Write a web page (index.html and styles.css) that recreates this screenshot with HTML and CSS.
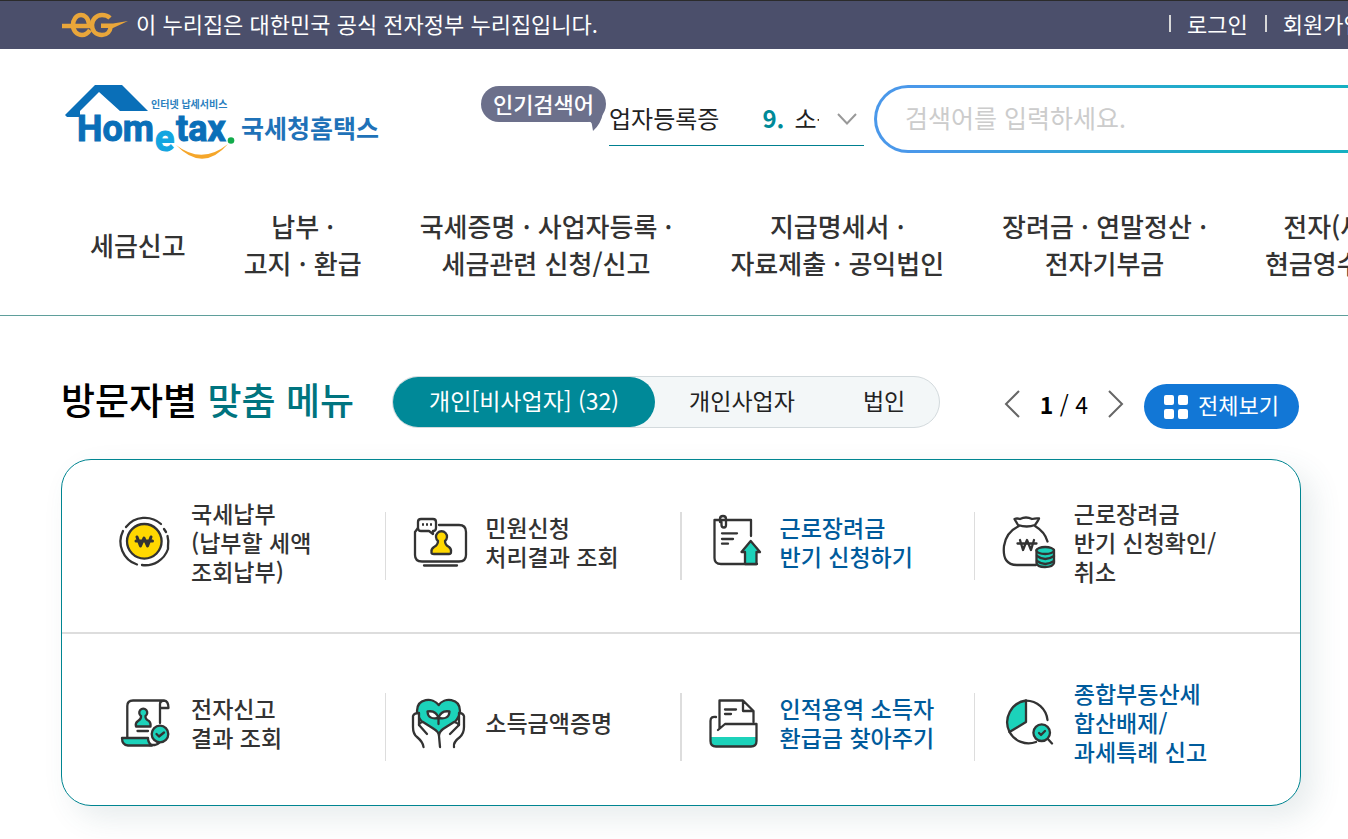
FILE: index.html
```html
<!DOCTYPE html>
<html lang="ko">
<head>
<meta charset="utf-8">
<meta name="viewport" content="width=device-width, initial-scale=1">
<title>국세청 홈택스</title>
<link rel="stylesheet" href="styles.css">
</head>
<body>
<div class="topbar">
  <svg class="eg" viewBox="0 0 66 26" aria-hidden="true">
    <g fill="none" stroke="#e9a63a">
      <path d="M0 14H29" stroke-width="4.500"/>
      <path d="M27 12C26 5 22 3 19 3 14 3 11 8 11 13 11 19 15 23 20 23 23 23 26 21 28 18" stroke-width="4.500"/>
      <path d="M48 6C45 3 42 3 40 3 34 3 30 8 30 13 30 19 34 23 40 23 46 23 48 20 49 14" stroke-width="4.500"/>
    </g>
    <path d="M39 11.500H51L66 9 51 16 39 16Z" fill="#e9a63a"/>
  </svg>
  <p class="topbar-text">이 누리집은 대한민국 공식 전자정부 누리집입니다.</p>
  <ul class="util">
    <li><a href="#">로그인</a></li>
    <li><a href="#">회원가입</a></li>
  </ul>
</div>

<header class="header">
  <div class="header-row">
    <a class="logo" href="#" aria-label="Hometax 국세청홈택스">
      <svg viewBox="0 0 320 78">
        <path d="M0 30 30 0H57L83 26H55L34 7 15 26V32H2Z" fill="#0a6fb8"/>
        <text class="logo-en" x="12" y="56">Hom</text>
        <text class="logo-e" x="90" y="66">e</text>
        <text class="logo-en" x="111" y="56">tax</text>
        <circle cx="166" cy="55.500" r="3.300" fill="#12ab4b"/>
        <path d="M111 60Q137 80 163 59 138 88 111 60Z" fill="#f5a62a"/>
        <text class="logo-sub" x="86" y="23">인터넷 납세서비스</text>
        <text class="logo-ko" x="176" y="53">국세청홈택스</text>
      </svg>
    </a>
    <div class="popular">
      <strong class="bubble">인기검색어
        <svg viewBox="0 0 20 20" aria-hidden="true"><path d="M0 10Q6 10 6 14L7 20Q15 13 17 2L8 0Z" fill="#6c708b"/></svg>
      </strong>
      <div class="ranking">
        <p class="ranking-list"><span class="word">업자등록증</span><b>9.</b><span>소득금액증명</span></p>
        <button class="ranking-toggle" type="button" aria-label="인기검색어 펼치기">
          <svg viewBox="0 0 20 12"><path d="M1 1 10 10.500 19 1" fill="none" stroke="#999" stroke-width="2"/></svg>
        </button>
      </div>
    </div>
    <form class="search"><input type="text" aria-label="검색어" placeholder="검색어를 입력하세요."></form>
  </div>
  <nav class="gnb">
    <a href="#">세금신고</a>
    <a href="#">납부 ·<br>고지 · 환급</a>
    <a href="#">국세증명 · 사업자등록 ·<br>세금관련 신청/신고</a>
    <a href="#">지급명세서 ·<br>자료제출 · 공익법인</a>
    <a href="#">장려금 · 연말정산 ·<br>전자기부금</a>
    <a href="#">전자(세금)계산서 ·<br>현금영수증 · 신용카드</a>
  </nav>
</header>

<main class="main">
  <div class="menu-head">
    <h1>방문자별 <em>맞춤 메뉴</em></h1>
    <div class="tabs">
      <button class="tab active" type="button">개인[비사업자] (32)</button>
      <button class="tab" type="button">개인사업자</button>
      <button class="tab" type="button">법인</button>
    </div>
    <div class="pager">
      <button type="button" aria-label="이전"><svg viewBox="0 0 16 28"><path d="M15 1 2 14 15 27" fill="none" stroke="#666" stroke-width="2"/></svg></button>
      <span><b>1</b> / 4</span>
      <button type="button" aria-label="다음"><svg viewBox="0 0 16 28"><path d="M1 1 14 14 1 27" fill="none" stroke="#666" stroke-width="2"/></svg></button>
    </div>
    <button class="all" type="button">
      <svg viewBox="0 0 24 24" fill="#fff" aria-hidden="true"><rect x="0" y="0" width="10" height="10" rx="2"/><rect x="14" y="0" width="10" height="10" rx="2"/><rect x="0" y="14" width="10" height="10" rx="2"/><rect x="14" y="14" width="10" height="10" rx="2"/></svg>
      <span>전체보기</span>
    </button>
  </div>

  <div class="card">
    <div class="row">
      <a class="item" href="#">
        <svg class="ico" viewBox="0 0 60 60">
          <circle cx="30.300" cy="29.300" r="17.300" fill="#ffd800"/>
          <path d="M12 15A24 24 0 0 1 47 12M50 17 52 20M53.500 24A24 24 0 0 1 54 34L54 37A24 24 0 0 1 28 53M23 52.500A24 24 0 0 1 9 19"/>
          <path d="M23 25 26.500 34 30 26 33.500 34 37 25M22 29H38.500" stroke-width="3"/>
        </svg>
        <span>국세납부<br>(납부할 세액<br>조회납부)</span>
      </a>
      <a class="item" href="#">
        <svg class="ico" viewBox="0 0 60 60">
          <path d="M31 13H51Q58 13 58 20V43Q58 49.500 51 49.500H14Q7 49.500 7 43V20L10 16M16 53.500H49"/>
          <path d="M13 7H25Q28 7 28 10V16Q28 19 25 19V22L21 19H13Q10 19 10 16V10Q10 7 13 7Z" fill="#fff"/>
          <path d="M14 12.500H24" stroke-dasharray="2 2" stroke-linecap="butt"/>
          <path d="M30 29A5.500 5.500 0 1 1 37 29Q37 33 41 35 43.500 37 43 40 43 42 41 42H26Q23 42 23.500 40 23 37 26 35 30 33 30 29Z" fill="#ffd800"/>
        </svg>
        <span>민원신청<br>처리결과 조회</span>
      </a>
      <a class="item thick blue" href="#">
        <svg class="ico" viewBox="0 0 60 60">
          <path d="M48 24V8H11.500V46Q11.500 52 18 52H54"/>
          <path d="M17 10V7Q17 4 20 4 23 4 23 7V13Q23 15.500 21 15.500 18.500 15.500 18.500 13V10"/>
          <path d="M19 21.300H34M19 27H30M19 31.700H25"/>
          <path d="M47.700 29 57 40H53.500V52H42V40H38.500Z" fill="#1cd2ba"/>
        </svg>
        <span>근로장려금<br>반기 신청하기</span>
      </a>
      <a class="item" href="#">
        <svg class="ico" viewBox="0 0 60 60">
          <path d="M21 13Q18 8 17.500 7 20 6 23 7 29 4 35 7 39 6 42 6.500 41 9 38 13Q30 16 21 13ZM22 14Q9 20 7 34 5 53 20 53H39M38 14Q48 20 50.500 29.500"/>
          <path d="M23 28 26 38 30 28 34 38 37 28M20.500 31.500H39.500"/>
          <path d="M39.500 38V51Q40 55 48 55 56 55 57 51V38Z" fill="#1cd2ba"/>
          <ellipse cx="48.200" cy="38.500" rx="8.700" ry="3.500" fill="#1cd2ba"/>
          <path d="M40 44Q48 50 57 44M40 49Q48 55 57 49"/>
        </svg>
        <span>근로장려금<br>반기 신청확인/<br>취소</span>
      </a>
    </div>
    <div class="row">
      <a class="item" href="#">
        <svg class="ico" viewBox="0 0 60 60">
          <path d="M13.300 44V13Q13.300 7.500 19 7.500H50Q54.500 8 54.500 15H46V30M46 15V11Q46 8 50 7.500M35 52H41Q44 51 45 50"/>
          <path d="M8 45H34Q34 50 38 52.500H14Q8 52 8 45Z" fill="#1cd2ba"/>
          <path d="M27 23A4 4 0 1 1 31.500 23Q31 26 35 28 37 30 36.500 33.500H22Q21 30 24 28 27.500 26 27 23Z" fill="#1cd2ba"/>
          <path d="M23.500 38H34"/>
          <circle cx="46" cy="41" r="8.300" fill="#1cd2ba"/>
          <path d="M42.500 41 45 43.500 50 39.500"/>
        </svg>
        <span>전자신고<br>결과 조회</span>
      </a>
      <a class="item" href="#">
        <svg class="ico" viewBox="0 0 60 60">
          <path d="M30.700 12C25 4 9 5 9 18 9 27 20 35 30.700 41 41 35 52 27 52 18 52 5 36 4 30.700 12Z" fill="#1cd2ba"/>
          <path d="M30.500 25Q20 27 19.500 18.500 28 17 30.500 25 33 17 41.500 18.500 41 27 30.500 25Z" fill="#fff"/>
          <path d="M30.500 24V31"/>
          <path d="M15.500 54Q15 49 9 44 5 41 5 34V23Q6 20 11 20V32Q11 30 15 29L26 36Q31 39 31 43L32 54M46 54Q45 49 52 44 56 40 56 34V23Q55 20 51 20V32Q50 30 46 29L35 36Q31 39 31 43" fill="#fff"/>
          <path d="M11 32 19 41M51 32 42 41"/>
        </svg>
        <span>소득금액증명</span>
      </a>
      <a class="item thick blue" href="#">
        <svg class="ico" viewBox="0 0 60 60">
          <path d="M8 44H53V49Q53 53 49 53H12Q8 53 8 49Z" fill="#1cd2ba" stroke="none"/>
          <path d="M13 24Q7.500 23 7.500 28V48Q7.500 53.500 13 53.500H48Q53.500 53.500 53.500 48V31H22L15 37M16.500 35V7.500H40L50.500 18V29M40 8V18H50M22 16.500H33M22 21H28"/>
        </svg>
        <span>인적용역 소득자<br>환급금 찾아주기</span>
      </a>
      <a class="item blue" href="#">
        <svg class="ico" viewBox="0 0 60 60">
          <path d="M29 7.500A22 22 0 0 0 12.500 39L29 29Z" fill="#1cd2ba"/>
          <path d="M50.500 27A21.700 21.700 0 0 0 29 7.600M12.500 39A21.700 21.700 0 0 0 39 49M50 45 55 50.500"/>
          <circle cx="44.700" cy="39.700" r="8.300" fill="#1cd2ba"/>
          <path d="M42 40 44 42 48 38"/>
        </svg>
        <span>종합부동산세<br>합산배제/<br>과세특례 신고</span>
      </a>
    </div>
  </div>
</main>
</body>
</html>
```

FILE: styles.css
```css
* { box-sizing: border-box; }
body {
  margin: 0;
  overflow-x: hidden;
  background: #fff;
  color: #222;
  font-family: "Noto Sans CJK KR", sans-serif;
}
p, ul, h1 { margin: 0; padding: 0; }
a { color: inherit; text-decoration: none; }
button { padding: 0; border: 0; background: none; color: inherit; font: inherit; cursor: pointer; }
svg { display: block; }

.topbar {
  display: flex;
  align-items: center;
  height: 49px;
  padding-left: 62px;
  border-top: 1px solid #2b2b2b;
  background: #4b4f6b;
  color: #fff;
  font-size: 22px;
  line-height: 32px;
}
.eg { flex: none; width: 66px; height: 26px; margin-right: 8px; }
.topbar-text { padding-bottom: 5px; white-space: nowrap; }
.util {
  display: flex;
  flex: none;
  width: 180px;
  margin-left: auto;
  padding-bottom: 4px;
  overflow: hidden;
  list-style: none;
  white-space: nowrap;
}
.util li { display: flex; align-items: center; }
.util li::before {
  content: "";
  width: 2px;
  height: 17px;
  margin: 0 16px 0 1px;
  background: #d8d8d8;
}
.util li + li::before { margin-left: 17px; }

.header { border-bottom: 1px solid #5f9f9b; }
.header-row { display: flex; align-items: flex-start; padding: 36px 0 0 65px; }
.logo { flex: none; width: 320px; }
.logo-en, .logo-e {
  fill: #0a6fb8;
  stroke: #0a6fb8;
  stroke-width: 1;
  font: bold 36px Roboto, sans-serif;
}
.logo-e { fill: #12a5e0; stroke: #12a5e0; }
.logo-sub { fill: #2a7fc0; font-size: 10px; font-weight: 700; }
.logo-ko { fill: #1f72b8; font-size: 25px; font-weight: 700; }
.popular { display: flex; flex: none; margin-left: 96px; }
.bubble {
  position: relative;
  width: 125px;
  height: 36px;
  margin-top: 1px;
  border-radius: 18px;
  background: #6c708b;
  color: #fff;
  font-size: 22px;
  font-weight: 500;
  line-height: 34px;
  text-align: center;
}
.bubble svg { position: absolute; right: 0; bottom: -9px; width: 20px; height: 20px; }
.ranking {
  display: flex;
  align-items: center;
  justify-content: space-between;
  width: 255px;
  height: 61px;
  margin-left: 3px;
  padding-top: 8px;
  border-bottom: 1px solid #008090;
}
.ranking-list {
  display: flex;
  width: 210px;
  padding-bottom: 2px;
  overflow: hidden;
  font-size: 24px;
  line-height: 36px;
  white-space: nowrap;
}
.word { margin-right: 43px; }
.ranking-list b { margin-right: 10px; color: #008a98; }
.ranking-toggle { margin-right: 7px; }
.ranking-toggle svg { width: 20px; height: 12px; }
.search {
  display: flex;
  flex: 1;
  height: 68px;
  margin-left: 10px;
  border: 3px solid transparent;
  border-right: 0;
  border-radius: 34px 0 0 34px;
  background: linear-gradient(#fff, #fff) padding-box, linear-gradient(90deg, #4a98ea 10%, #16b0c2 80%) border-box;
}
.search input {
  width: 100%;
  min-width: 0;
  padding: 0 0 4px 28px;
  border: 0;
  outline: 0;
  background: none;
  color: #222;
  font: 25px "Noto Sans CJK KR", sans-serif;
}
.search input::placeholder { color: #ccc; }

.gnb {
  display: flex;
  align-items: center;
  gap: 58px;
  padding: 44px 0 34px 90px;
  overflow: hidden;
  color: #333;
  font-size: 26px;
  font-weight: 500;
  line-height: 37px;
  text-align: center;
  white-space: nowrap;
}
.gnb a { flex: none; }

.main { padding: 60px 47px 33px 61px; }
.menu-head { display: flex; align-items: flex-start; white-space: nowrap; }
h1 { color: #000; font-size: 37px; font-weight: 500; line-height: 46px; }
h1 em { color: #00747f; font-style: normal; }
.tabs {
  display: flex;
  margin-left: 38px;
  border: 1px solid #d3dadd;
  border-radius: 26px;
  background: #f3f7f8;
  font-size: 23px;
  line-height: 46px;
}
.tab { padding: 0 34px 4px; border-radius: 25px; }
.tab.active { padding: 0 36px 4px; background: #008998; color: #fff; }
.pager {
  display: flex;
  align-items: center;
  gap: 20px;
  height: 56px;
  margin-left: auto;
  color: #000;
  font-size: 23px;
}
.pager svg { width: 16px; height: 28px; }
.all {
  display: flex;
  align-items: center;
  gap: 10px;
  height: 45px;
  margin: 8px 2px 0 20px;
  padding: 0 20px;
  border-radius: 23px;
  background: #1277d6;
  color: #fff;
  font-size: 22px;
}
.all svg { width: 24px; height: 24px; }
.all span { padding-bottom: 5px; }

.card {
  margin-top: 27px;
  border: 1px solid #008591;
  border-radius: 30px;
  background: #fff;
  box-shadow: 12px 12px 30px rgba(60, 100, 110, 0.12);
}
.row {
  display: grid;
  grid-template-columns: repeat(4, 1fr);
  min-height: 174px;
  padding: 0 32px 8px 29px;
  border-bottom: 2px solid #ddd;
}
.row:last-child { min-height: 171px; padding-top: 6px; padding-bottom: 0; border-bottom: 0; }
.item {
  display: flex;
  align-items: center;
  color: #333;
  font-size: 23px;
  font-weight: 500;
  line-height: 29px;
  white-space: nowrap;
}
.item::before { content: ""; flex: none; width: 1px; height: 68px; margin: 8px 22px 0 0; background: #ddd; }
.item.thick::before { width: 2px; margin-right: 21px; }
.item:first-child::before { background: none; }
.item.blue { color: #005b9c; }
.ico {
  flex: none;
  width: 60px;
  height: 60px;
  margin-right: 17px;
  fill: none;
  stroke: #333;
  stroke-width: 2.3;
  stroke-linecap: round;
  stroke-linejoin: round;
}
```
